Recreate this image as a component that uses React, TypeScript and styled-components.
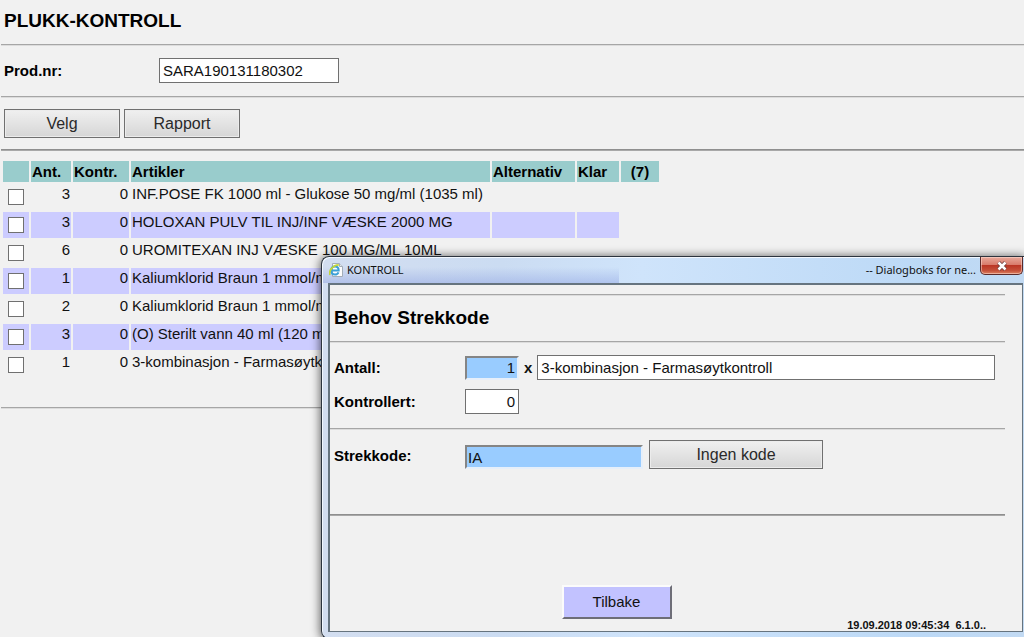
import React from "react";
import styled, { createGlobalStyle, css } from "styled-components";

const GlobalStyle = createGlobalStyle`
  *, *::before, *::after { box-sizing: border-box; }
  body {
    margin: 0;
    background: #f1f1f1;
    color: #111;
    font-family: "Liberation Sans", Arial, sans-serif;
    font-size: 15px;
    line-height: 18px;
  }
`;

const Page = styled.main`
  position: relative;
  min-height: 100vh;
  padding-left: 1px;
  overflow: hidden;
`;

const Rule = styled.hr<{ $strong?: boolean }>`
  height: 2px;
  margin: 0;
  border: 0;
  border-top: 1px solid ${(p) => (p.$strong ? "#8f8f8f" : "#a6a6a6")};
  background: ${(p) => (p.$strong ? "#a8a8a8" : "#dcdcdc")};
`;

const PageTitle = styled.h1`
  margin: 0;
  padding: 10px 3px 12px;
  font-size: 19px;
  line-height: 22px;
  color: #000;
`;

const ProductRow = styled.div`
  display: flex;
  align-items: center;
  padding: 12px 3px 13px;
`;

const Label = styled.label<{ $width: number }>`
  flex: none;
  width: ${(p) => p.$width}px;
  font-weight: bold;
  color: #000;
`;

const TextField = styled.input<{ $width?: number; $active?: boolean; $right?: boolean }>`
  ${(p) => (p.$width ? css`width: ${p.$width}px;` : css`flex: 1; min-width: 0;`)}
  height: 25px;
  padding: 0 3px;
  border: 1px solid #707070;
  border-radius: 0;
  outline: 0;
  background: #fff;
  color: #111;
  font: inherit;
  text-align: ${(p) => (p.$right ? "right" : "left")};
  ${(p) =>
    p.$active &&
    css`
      height: 24px;
      padding: 0 ${p.$right ? 2 : 0}px 0 1px;
      border: 2px solid;
      border-color: #858585 #e6effa #e6effa #858585;
      background: #99ccff;
    `}
`;

const Toolbar = styled.div`
  display: flex;
  gap: 4px;
  padding: 11px 3px;
`;

const Button = styled.button<{ $width: number }>`
  width: ${(p) => p.$width}px;
  height: 29px;
  padding: 0;
  border: 1px solid #707070;
  border-radius: 0;
  background: linear-gradient(#f0f0f0, #e3e3e3 50%, #d6d6d6);
  box-shadow: inset 0 0 0 1px #ececec;
  color: #2a2a2a;
  font: inherit;
  font-size: 16px;
`;

const BackButton = styled(Button)`
  height: 34px;
  border: 2px solid;
  border-color: #fbfbfb #6e6e78 #6e6e78 #fbfbfb;
  background: #c2c2ff;
  box-shadow: none;
  color: #111;
  font-size: 15px;
`;

const ArticleTable = styled.table`
  width: 660px;
  margin: 8px 0 27px;
  border-collapse: separate;
  border-spacing: 2px;
  table-layout: fixed;
`;

const Column = styled.col<{ $width: number }>`
  width: ${(p) => p.$width}px;
`;

const HeadCell = styled.th<{ $center?: boolean }>`
  height: 21px;
  padding: 0 1px;
  background: #99cccc;
  color: #000;
  text-align: ${(p) => (p.$center ? "center" : "left")};
  white-space: nowrap;
`;

const Cell = styled.td<{ $right?: boolean }>`
  height: 26px;
  padding: 0 1px 6px;
  text-align: ${(p) => (p.$right ? "right" : "left")};
  white-space: nowrap;
`;

const TickCell = styled(Cell)`
  padding: 0 0 1px 5px;
`;

const ArticleRow = styled.tr<{ $striped: boolean }>`
  ${Cell} {
    background: ${(p) => (p.$striped ? "#ccccff" : "transparent")};
  }
`;

const Tick = styled.input`
  display: block;
  width: 16px;
  height: 16px;
  margin: 0;
  border: 1px solid #707070;
  background: #fff;
  appearance: none;
`;

const Dialog = styled.section`
  position: absolute;
  top: 256px;
  left: 321px;
  right: 0;
  padding: 0 1px 6px 6px;
  border: 1px solid #2c343e;
  border-right: 0;
  border-radius: 8px 0 0 8px;
  background:
    linear-gradient(rgba(140, 160, 225, 0), rgba(140, 160, 225, 0.45)) 0 10px / 297px 16px no-repeat,
    linear-gradient(90deg, #d3def0 0, #cbdcf2 180px, #cfe4fb 320px, #bcd9f6 600px, #c2daf3);
  box-shadow: inset 1px 1px 0 #f2f8ff, 0 1px 10px 1px rgba(0, 0, 0, 0.6);
`;

const TitleBar = styled.header`
  display: flex;
  align-items: flex-start;
  height: 26px;
  color: #111;
  font-family: "Noto Sans", sans-serif;
  font-size: 11px;
  line-height: 26px;
`;

const DialogName = styled.span`
  flex: 1;
  padding-left: 3px;
`;

const CloseButton = styled.button`
  display: flex;
  align-items: center;
  justify-content: center;
  width: 43px;
  height: 18px;
  margin-left: 4px;
  padding: 0;
  border: 1px solid #5a2a2a;
  border-top: 0;
  border-radius: 0 0 5px 5px;
  background: linear-gradient(#e9a99b, #d97c6c 45%, #bb3625 50%, #c5513a 80%, #dd8262);
  box-shadow: inset 0 0 0 1px rgba(255, 225, 215, 0.5);
`;

const PageIcon = styled.svg`
  flex: none;
  margin-top: 5px;
  margin-left: 1px;
`;

const Client = styled.div`
  padding: 9px 17px 0 0;
  border: 2px solid #66747f;
  border-width: 2px 1px 1px 2px;
  background: #f1f1f1;
`;

const DialogTitle = styled.h2`
  margin: 0;
  padding: 11px 4px 12px;
  font-size: 19px;
  line-height: 22px;
  color: #000;
`;

const Fields = styled.div`
  display: flex;
  flex-direction: column;
  gap: 9px;
  padding: 12px 10px 14px 4px;
`;

const FieldRow = styled.div`
  display: flex;
  align-items: center;
`;

const Times = styled.span`
  padding: 0 5px;
  font-weight: bold;
`;

const BarcodeRow = styled.div`
  display: flex;
  align-items: flex-end;
  padding: 10px 4px 45px;

  ${Label} {
    line-height: 26px;
  }

  ${Button} {
    margin-left: 6px;
  }
`;

const Actions = styled.div`
  display: flex;
  justify-content: center;
  padding: 69px 102px 0 0;
`;

const Status = styled.footer`
  padding-right: 19px;
  font-size: 11px;
  line-height: 12px;
  font-weight: bold;
  text-align: right;
  white-space: pre;
`;

const articles = [
  { count: 3, checked: 0, name: "INF.POSE FK 1000 ml - Glukose 50 mg/ml (1035 ml)" },
  { count: 3, checked: 0, name: "HOLOXAN PULV TIL INJ/INF VÆSKE 2000 MG" },
  { count: 6, checked: 0, name: "UROMITEXAN INJ VÆSKE 100 MG/ML 10ML" },
  { count: 1, checked: 0, name: "Kaliumklorid Braun 1 mmol/ml" },
  { count: 2, checked: 0, name: "Kaliumklorid Braun 1 mmol/ml" },
  { count: 3, checked: 0, name: "(O) Sterilt vann 40 ml (120 ml)" },
  { count: 1, checked: 0, name: "3-kombinasjon - Farmasøytkontroll" },
];

const columnWidths = [26, 40, 56, 359, 83, 42, 38];

function Articles() {
  return (
    <ArticleTable>
      <colgroup>
        {columnWidths.map((width, i) => (
          <Column key={i} $width={width} />
        ))}
      </colgroup>
      <thead>
        <tr>
          <HeadCell />
          <HeadCell>Ant.</HeadCell>
          <HeadCell>Kontr.</HeadCell>
          <HeadCell>Artikler</HeadCell>
          <HeadCell>Alternativ</HeadCell>
          <HeadCell>Klar</HeadCell>
          <HeadCell $center>(7)</HeadCell>
        </tr>
      </thead>
      <tbody>
        {articles.map((article, i) => (
          <ArticleRow key={i} $striped={i % 2 === 1}>
            <TickCell>
              <Tick type="checkbox" aria-label={article.name} />
            </TickCell>
            <Cell $right>{article.count}</Cell>
            <Cell $right>{article.checked}</Cell>
            <Cell>{article.name}</Cell>
            <Cell />
            <Cell />
          </ArticleRow>
        ))}
      </tbody>
    </ArticleTable>
  );
}

function BrowserPageIcon() {
  return (
    <PageIcon width="15" height="16" viewBox="0 0 15 16" aria-hidden="true">
      <path d="M3.500 1.500h7l3 3v10h-10z" fill="#fdfdfd" stroke="#a3adb8" />
      <path d="M10.500 1.500v3h3" fill="#dfe5ec" stroke="#a3adb8" />
      <path d="M2.500 8.500h7.200c0-2.500-1.500-4-3.700-4S2.200 6.200 2.200 8.600s1.600 4 3.800 4c1.700 0 2.900-.8 3.500-2.200" fill="none" stroke="#3aa0d8" strokeWidth="2" />
      <path d="M1 12.800C-.6 9.500 3.500 3 9.800 2.800" fill="none" stroke="#c3d53a" strokeWidth="1.800" />
    </PageIcon>
  );
}

function ControlDialog() {
  return (
    <Dialog role="dialog" aria-label="KONTROLL">
      <TitleBar>
        <BrowserPageIcon />
        <DialogName>KONTROLL</DialogName>
        <span>-- Dialogboks for ne...</span>
        <CloseButton type="button" aria-label="Lukk">
          <svg width="12" height="10" viewBox="0 0 12 10">
            <path d="M2.500 1.500l7 7M9.500 1.500l-7 7" stroke="#6b3a3a" strokeWidth="4" />
            <path d="M2.500 1.500l7 7M9.500 1.500l-7 7" stroke="#fff" strokeWidth="2.500" />
          </svg>
        </CloseButton>
      </TitleBar>
      <Client>
        <Rule />
        <DialogTitle>Behov Strekkode</DialogTitle>
        <Rule />
        <Fields>
          <FieldRow>
            <Label htmlFor="count" $width={131}>Antall:</Label>
            <TextField id="count" $width={54} $active $right defaultValue="1" />
            <Times>x</Times>
            <TextField aria-label="Artikkel" defaultValue="3-kombinasjon - Farmasøytkontroll" />
          </FieldRow>
          <FieldRow>
            <Label htmlFor="checked" $width={131}>Kontrollert:</Label>
            <TextField id="checked" $width={54} $right defaultValue="0" />
          </FieldRow>
        </Fields>
        <Rule />
        <BarcodeRow>
          <Label htmlFor="barcode" $width={131}>Strekkode:</Label>
          <TextField id="barcode" $width={178} $active defaultValue="IA" />
          <Button type="button" $width={174}>Ingen kode</Button>
        </BarcodeRow>
        <Rule $strong />
        <Actions>
          <BackButton type="button" $width={110}>Tilbake</BackButton>
        </Actions>
        <Status>{"19.09.2018 09:45:34  6.1.0.."}</Status>
      </Client>
    </Dialog>
  );
}

export default function App() {
  return (
    <>
      <GlobalStyle />
      <Page>
        <PageTitle>PLUKK-KONTROLL</PageTitle>
        <Rule />
        <ProductRow>
          <Label htmlFor="product" $width={155}>Prod.nr:</Label>
          <TextField id="product" $width={180} defaultValue="SARA190131180302" />
        </ProductRow>
        <Rule />
        <Toolbar>
          <Button type="button" $width={116}>Velg</Button>
          <Button type="button" $width={116}>Rapport</Button>
        </Toolbar>
        <Rule $strong />
        <Articles />
        <Rule />
        <ControlDialog />
      </Page>
    </>
  );
}
